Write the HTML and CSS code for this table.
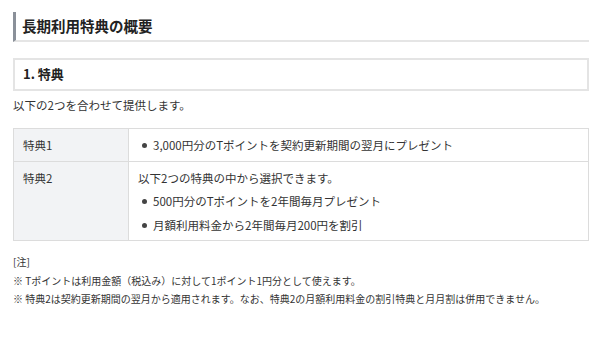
FILE: index.html
```html
<!DOCTYPE html>
<html lang="ja">
<head>
<meta charset="utf-8">
<link rel="stylesheet" href="styles.css">
</head>
<body>
<div class="page">
  <h2 class="title">長期利用特典の概要</h2>
  <h3 class="subtitle">1. 特典</h3>
  <p class="lead">以下の2つを合わせて提供します。</p>
  <table class="spec">
    <tr class="row1">
      <th>特典1</th>
      <td>
        <ul class="dots"><li>3,000円分のTポイントを契約更新期間の翌月にプレゼント</li></ul>
      </td>
    </tr>
    <tr class="row2">
      <th>特典2</th>
      <td>
        <p class="cell-text">以下2つの特典の中から選択できます。</p>
        <ul class="dots">
          <li>500円分のTポイントを2年間毎月プレゼント</li>
          <li>月額利用料金から2年間毎月200円を割引</li>
        </ul>
      </td>
    </tr>
  </table>
  <div class="notes">
    <p class="note-head">[注]</p>
    <p class="note">※ Tポイントは利用金額（税込み）に対して1ポイント1円分として使えます。</p>
    <p class="note">※ 特典2は契約更新期間の翌月から適用されます。なお、特典2の月額利用料金の割引特典と月月割は併用できません。</p>
  </div>
</div>
</body>
</html>
```
FILE: styles.css
```css
* { box-sizing: border-box; }
body {
  margin: 0;
  background: #fff;
  font-family: "Noto Sans CJK JP", "Noto Sans", sans-serif;
  color: #333;
}
.page {
  padding: 12px 11px 0 13px;
}
.title {
  margin: 0;
  height: 30px;
  border-left: 3px solid #8a9099;
  border-bottom: 2px solid #e5e5e5;
  padding-left: 6px;
  font-size: 14.5px;
  font-weight: bold;
  line-height: 27px;
  color: #222;
}
.subtitle {
  margin: 16px 0 0;
  height: 33px;
  border: 2px solid #e4e4e4;
  padding-left: 8px;
  font-size: 13px;
  font-weight: bold;
  line-height: 28px;
  color: #222;
}
.lead {
  margin: 4px 0 0;
  font-size: 11.5px;
  line-height: 20px;
}
.spec {
  margin-top: 13px;
  width: 100%;
  border-collapse: collapse;
  font-size: 11.5px;
}
.spec th, .spec td {
  border: 1px solid #dcdcdc;
  vertical-align: top;
  text-align: left;
}
.spec th {
  width: 115px;
  background: #f2f3f5;
  font-weight: normal;
  padding: 6px 9px;
  line-height: 20px;
}
.spec td {
  padding: 6px 9px 5px;
  line-height: 20px;
}
.row1 th, .row1 td { height: 33px; }
.cell-text { margin: 0 0 3px; }
.dots {
  list-style: none;
  margin: 0;
  padding: 0;
}
.dots li {
  position: relative;
  padding-left: 15px;
  margin-bottom: 4px;
}
.dots li:last-child { margin-bottom: 0; }
.row1 .dots li { margin: 0; }
.dots li::before {
  content: "";
  position: absolute;
  left: 4px;
  top: 8px;
  width: 5px;
  height: 5px;
  border-radius: 50%;
  background: #444;
}
.notes {
  margin-top: 12px;
  font-size: 10px;
  color: #333;
}
.notes p {
  margin: 0;
  line-height: 18.5px;
}
```
